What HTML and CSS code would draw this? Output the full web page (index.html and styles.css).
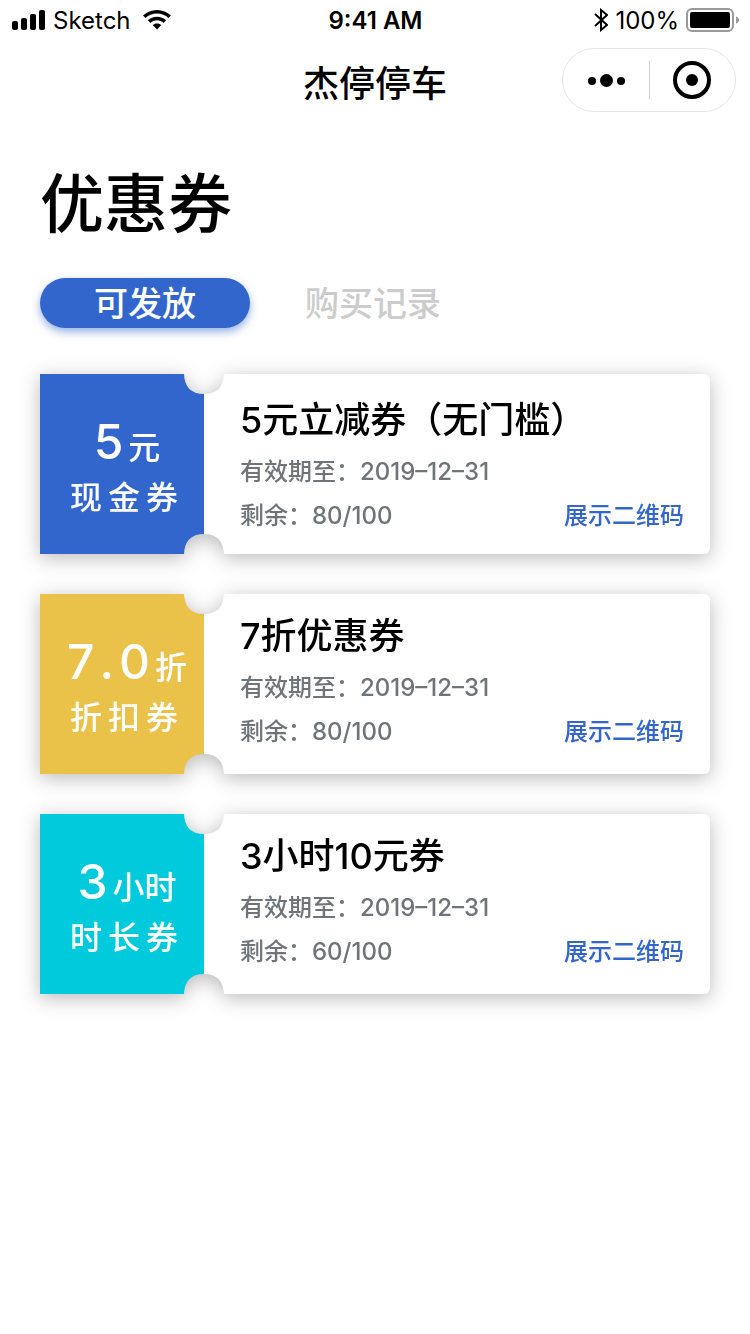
FILE: index.html
```html
<!DOCTYPE html>
<html lang="zh-CN">
<head>
<meta charset="utf-8">
<meta name="viewport" content="width=device-width, initial-scale=1">
<title>优惠券</title>
<link rel="stylesheet" href="styles.css">
</head>
<body>
<svg class="defs" aria-hidden="true">
  <symbol id="stub-shape" viewBox="0 0 184 180" preserveAspectRatio="none">
    <path fill="currentColor" d="M0 0H144C144.500 13 151 20 164 20V160C151 160 144.500 167 144 180H0Z"/>
    <path fill="#fff" d="M184 0C183.500 13 177 20 164 20V160C177 160 183.500 167 184 180Z"/>
  </symbol>
</svg>
<header>
  <div class="status">
    <div class="status-left">
      <svg width="34" height="20" viewBox="0 0 34 20" aria-hidden="true">
        <rect x="0" y="11" width="6" height="9" rx="2"/><rect x="9" y="8" width="6" height="12" rx="2"/><rect x="18" y="4" width="6" height="16" rx="2"/><rect x="27" y="0" width="6" height="20" rx="2"/>
      </svg>
      <span class="carrier">Sketch</span>
      <svg width="28" height="20" viewBox="0 0 28 20" aria-hidden="true">
        <path d="M14 0C8.600 0 3.700 2.100 0 5.500L2.500 8C5.500 5.200 9.500 3.500 14 3.500S22.500 5.200 25.500 8L28 5.500C24.300 2.100 19.400 0 14 0Z"/>
        <path d="M14 6.800C10.500 6.800 7.300 8.100 4.900 10.300L7.500 12.900C9.200 11.300 11.500 10.300 14 10.300S18.800 11.300 20.500 12.900L23.100 10.300C20.700 8.100 17.500 6.800 14 6.800Z"/>
        <path d="M14 13.400C12.300 13.400 10.800 14 9.700 15.100L14 19.600L18.300 15.100C17.200 14 15.700 13.400 14 13.400Z"/>
      </svg>
    </div>
    <time class="clock">9:41 AM</time>
    <div class="status-right">
      <svg width="14" height="24" viewBox="0 0 14 24" fill="none" stroke="#000" stroke-width="2" aria-hidden="true"><path d="M1 6L13 17L7 22V2L13 7L1 18"/></svg>
      <span>100%</span>
      <svg width="53" height="24" viewBox="0 0 53 24" aria-hidden="true">
        <rect x="1" y="1" width="46" height="22" rx="5" fill="none" stroke="#999" stroke-width="2"/>
        <rect x="4" y="4" width="40" height="16" rx="2"/>
        <path d="M50 8.500C52 9 53 10.500 53 12S52 15 50 15.500Z" fill="#999"/>
      </svg>
    </div>
  </div>
  <div class="nav">
    <span class="nav-title">杰停停车</span>
    <div class="capsule">
      <button type="button" aria-label="更多">
        <svg width="40" height="14" viewBox="0 0 40 14"><circle cx="6" cy="8" r="4"/><circle cx="20.500" cy="7.500" r="6.500"/><circle cx="35" cy="8" r="4"/></svg>
      </button>
      <button type="button" aria-label="关闭">
        <svg width="38" height="38" viewBox="0 0 38 38"><circle cx="19" cy="19" r="17" fill="none" stroke="#000" stroke-width="4"/><circle cx="19" cy="19" r="6"/></svg>
      </button>
    </div>
  </div>
</header>
<main>
  <h1>优惠券</h1>
  <div class="tabs">
    <button type="button" class="tab tab-active">可发放</button>
    <button type="button" class="tab">购买记录</button>
  </div>
  <ul class="tickets">
    <li class="ticket ticket-cash">
      <svg class="art" aria-hidden="true"><use href="#stub-shape"/></svg>
      <div class="stub"><div class="amount"><b>5</b>元</div><div class="kind">现金券</div></div>
      <div class="info">
        <h2>5元立减券（无门槛）</h2>
        <p>有效期至：2019–12–31</p>
        <div class="row"><p>剩余：80/100</p><a href="#">展示二维码</a></div>
      </div>
    </li>
    <li class="ticket ticket-discount">
      <svg class="art" aria-hidden="true"><use href="#stub-shape"/></svg>
      <div class="stub"><div class="amount"><b>7.0</b>折</div><div class="kind">折扣券</div></div>
      <div class="info">
        <h2>7折优惠券</h2>
        <p>有效期至：2019–12–31</p>
        <div class="row"><p>剩余：80/100</p><a href="#">展示二维码</a></div>
      </div>
    </li>
    <li class="ticket ticket-time">
      <svg class="art" aria-hidden="true"><use href="#stub-shape"/></svg>
      <div class="stub"><div class="amount"><b>3</b>小时</div><div class="kind">时长券</div></div>
      <div class="info">
        <h2>3小时10元券</h2>
        <p>有效期至：2019–12–31</p>
        <div class="row"><p>剩余：60/100</p><a href="#">展示二维码</a></div>
      </div>
    </li>
  </ul>
</main>
</body>
</html>
```
FILE: styles.css
```css
* { box-sizing: border-box; margin: 0; padding: 0; }
body { background: #fff; color: #000; font-family: Inter, "Noto Sans CJK SC", sans-serif; }
button { border: 0; background: none; color: inherit; font: inherit; cursor: pointer; }
.defs { display: none; }

.status { display: grid; grid-template-columns: 1fr auto 1fr; align-items: center; height: 40px; padding: 0 11px 0 12px; font-size: 24px; }
.status-left, .status-right { display: flex; align-items: center; }
.status-left { gap: 7px; }
.carrier { margin-right: 5px; }
.status-right { justify-content: flex-end; gap: 7px; }
.clock { font-weight: 600; font-size: 24px; }

.nav { display: grid; grid-template-columns: 1fr auto 1fr; align-items: center; padding: 8px 14px 0; }
.nav-title { grid-column: 2; padding-top: 8px; font-size: 36px; line-height: 56px; font-weight: 500; }
.capsule { justify-self: end; display: flex; align-items: center; width: 174px; height: 64px; border: 1px solid #e5e5e5; border-radius: 32px; }
.capsule button { flex: 1; display: flex; align-items: center; justify-content: center; height: 38px; }
.capsule button + button { border-left: 1px solid #ccc; }

main { padding: 44px 40px; }
h1 { font-size: 64px; line-height: 96px; font-weight: 500; }
.tabs { display: flex; gap: 18px; margin-top: 26px; }
.tab { min-width: 210px; height: 50px; padding-top: 2px; border-radius: 25px; color: #ccc; font-size: 34px; line-height: 48px; font-weight: 500; }
.tab-active { background: #3266cc; color: #fff; box-shadow: 0 4px 8px rgba(50, 102, 204, .5); }

.tickets { display: flex; flex-direction: column; gap: 40px; margin-top: 46px; list-style: none; }
.ticket { display: grid; grid-template-columns: 164px 20px 1fr; min-height: 180px; filter: drop-shadow(0 4px 10px rgba(0, 0, 0, .27)); }
.ticket-cash { color: #3266cc; }
.ticket-discount { color: #eac24a; }
.ticket-time { color: #00cadc; }
.art { grid-area: 1 / 1 / 2 / 3; width: 100%; height: 100%; }
.stub { grid-area: 1 / 1; display: flex; flex-direction: column; align-items: center; justify-content: center; padding: 2px 0 0 10px; color: #fff; font-size: 32px; font-weight: 500; white-space: nowrap; }
.amount { display: flex; align-items: baseline; line-height: 60px; }
.amount b { font-size: 48px; font-weight: 500; font-kerning: none; letter-spacing: 5px; }
.kind { line-height: 40px; letter-spacing: 6px; }
.info { grid-area: 1 / 3; padding: 17px 26px 15px 16px; border-radius: 0 6px 6px 0; background: #fff; color: #6f7479; font-size: 24px; line-height: 44px; font-weight: 500; }
.ticket-cash .info { padding-top: 21px; padding-bottom: 11px; }
.info h2 { margin-bottom: 5px; color: #000; font-size: 36px; line-height: 50px; font-weight: 500; }
.row { display: flex; justify-content: space-between; }
.row a { color: #3266cc; text-decoration: none; }
```
